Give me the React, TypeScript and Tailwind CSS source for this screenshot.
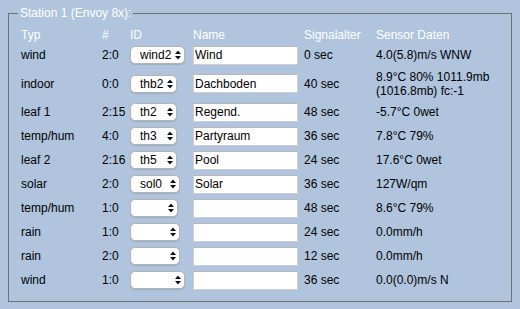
const rows = [
  { typ: 'wind', nr: '2:0', id: 'wind2', w: 'w-[55px]', name: 'Wind', age: '0 sec', data: '4.0(5.8)m/s WNW' },
  { typ: 'indoor', nr: '0:0', id: 'thb2', w: 'w-[47px]', name: 'Dachboden', age: '40 sec', data: '8.9°C 80% 1011.9mb (1016.8mb) fc:-1' },
  { typ: 'leaf 1', nr: '2:15', id: 'th2', w: 'w-[47px]', name: 'Regend.', age: '48 sec', data: '-5.7°C 0wet' },
  { typ: 'temp/hum', nr: '4:0', id: 'th3', w: 'w-[47px]', name: 'Partyraum', age: '36 sec', data: '7.8°C 79%' },
  { typ: 'leaf 2', nr: '2:16', id: 'th5', w: 'w-[47px]', name: 'Pool', age: '24 sec', data: '17.6°C 0wet' },
  { typ: 'solar', nr: '2:0', id: 'sol0', w: 'w-[50px]', name: 'Solar', age: '36 sec', data: '127W/qm' },
  { typ: 'temp/hum', nr: '1:0', id: '', w: 'w-[48px]', name: '', age: '48 sec', data: '8.6°C 79%' },
  { typ: 'rain', nr: '1:0', id: '', w: 'w-[50px]', name: '', age: '24 sec', data: '0.0mm/h' },
  { typ: 'rain', nr: '2:0', id: '', w: 'w-[50px]', name: '', age: '12 sec', data: '0.0mm/h' },
  { typ: 'wind', nr: '1:0', id: '', w: 'w-[55px]', name: '', age: '36 sec', data: '0.0(0.0)m/s N' },
];

// kleine Doppelpfeile wie beim Mac-Select
function Arrows() {
  return (
    <svg width="6" height="9" viewBox="0 0 6 9" className="pointer-events-none absolute right-[4px] top-1/2 -translate-y-1/2">
      <path d="M0 3.6 L3 0 L6 3.6 Z" fill="#111" />
      <path d="M0 5.4 L3 9 L6 5.4 Z" fill="#111" />
    </svg>
  );
}

export default function App() {
  return (
    <div className="w-[520px] h-[309px] bg-[#b0c4de] pt-[6px] font-['Liberation_Sans',Arial,sans-serif] text-[12px] leading-[14px] text-black">
      <fieldset className="ml-[8px] w-[503px] border border-[#707070] pl-[9px] pr-[4px] pb-[9px]">
        <legend className="px-[2px] text-white">Station 1 (Envoy 8x):</legend>
        <table className="mt-[7px] table-fixed border-collapse w-[489px]">
          <colgroup>
            <col className="w-[81px]" />
            <col className="w-[28px]" />
            <col className="w-[63px]" />
            <col className="w-[111px]" />
            <col className="w-[72px]" />
            <col />
          </colgroup>
          <thead>
            <tr className="h-[16px] text-left text-white">
              <th className="pl-[3px] p-0 font-normal">Typ</th>
              <th className="pl-[3px] p-0 font-normal">#</th>
              <th className="pl-[3px] p-0 font-normal">ID</th>
              <th className="pl-[3px] p-0 font-normal">Name</th>
              <th className="pl-[3px] p-0 font-normal">Signalalter</th>
              <th className="pl-[3px] p-0 font-normal">Sensor Daten</th>
            </tr>
          </thead>
          <tbody>
            {rows.map((r, i) => (
              <tr key={i} className={i === 1 ? 'h-[33px]' : 'h-[24px]'}>
                <td className="pl-[3px] align-middle">{r.typ}</td>
                <td className="pl-[3px] align-middle">{r.nr}</td>
                <td className="pl-[3px] align-middle">
                  <div className={`relative ${r.w} h-[18px]`}>
                    <select
                      defaultValue={r.id}
                      className="appearance-none w-full h-[18px] rounded-[5px] border border-[#b3b3b3] bg-white pl-[9px] pr-[10px] text-[12px] leading-[16px] shadow-[0_1px_1px_rgba(0,0,0,0.12)] outline-none"
                    >
                      <option value={r.id}>{r.id}</option>
                    </select>
                    <Arrows />
                  </div>
                </td>
                <td className="pl-[3px] align-middle">
                  <input
                    defaultValue={r.name}
                    className="block w-[105px] h-[19px] border border-[#cfcfcf] border-t-[#b8b8b8] bg-white px-[1px] text-[12px] outline-none"
                  />
                </td>
                <td className="pl-[3px] align-middle">{r.age}</td>
                <td className="pl-[3px] pr-[2px] align-middle">{r.data}</td>
              </tr>
            ))}
          </tbody>
        </table>
      </fieldset>
    </div>
  );
}
